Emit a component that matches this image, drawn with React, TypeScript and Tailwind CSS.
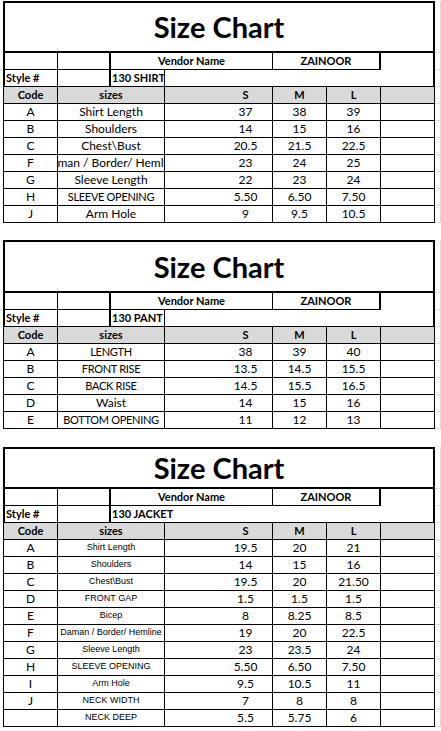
import React from "react";

type Row = [string, string, string, string, string];

const shirt: Row[] = [
  ["A", "Shirt Length", "37", "38", "39"],
  ["B", "Shoulders", "14", "15", "16"],
  ["C", "Chest\\Bust", "20.5", "21.5", "22.5"],
  ["F", "Daman / Border/ Hemline", "23", "24", "25"],
  ["G", "Sleeve Length", "22", "23", "24"],
  ["H", "SLEEVE OPENING", "5.50", "6.50", "7.50"],
  ["J", "Arm Hole", "9", "9.5", "10.5"],
];

const pant: Row[] = [
  ["A", "LENGTH", "38", "39", "40"],
  ["B", "FRONT RISE", "13.5", "14.5", "15.5"],
  ["C", "BACK RISE", "14.5", "15.5", "16.5"],
  ["D", "Waist", "14", "15", "16"],
  ["E", "BOTTOM OPENING", "11", "12", "13"],
];

const jacket: Row[] = [
  ["A", "Shirt Length", "19.5", "20", "21"],
  ["B", "Shoulders", "14", "15", "16"],
  ["C", "Chest\\Bust", "19.5", "20", "21.50"],
  ["D", "FRONT GAP", "1.5", "1.5", "1.5"],
  ["E", "Bicep", "8", "8.25", "8.5"],
  ["F", "Daman / Border/ Hemline", "19", "20", "22.5"],
  ["G", "Sleeve Length", "23", "23.5", "24"],
  ["H", "SLEEVE OPENING", "5.50", "6.50", "7.50"],
  ["I", "Arm Hole", "9.5", "10.5", "11"],
  ["J", "NECK WIDTH", "7", "8", "8"],
  ["", "NECK DEEP", "5.5", "5.75", "6"],
];

const cell =
  "flex h-[17px] items-center justify-center overflow-hidden whitespace-nowrap border-black";

// excel gridline stub on the right edge
const Grid = () => <div className="h-[17px] border-b border-r border-[#dadcdd]" />;

interface SheetProps {
  style: string;
  rows: Row[];
  titleH: string;
  arial?: boolean;
}

const nameClass = (name: string, arial?: boolean) => {
  if (arial) return "font-['Liberation_Sans',Arial,sans-serif] text-[9px]";
  // calibri caps are narrow, squeeze the lato ones a bit
  if (name === name.toUpperCase()) return "text-[11px] tracking-[-0.3px]";
  return "text-[12px]";
};

const Sheet = ({ style, rows, titleH, arial }: SheetProps) => {
  return (
    <div className="grid grid-cols-[55px_53px_54px_54px_54px_54px_54px_54px_6px]">
      {/* Title */}
      <div
        className={`col-span-8 flex items-center justify-center border-2 border-black text-[29px] font-bold ${titleH}`}
      >
        Size Chart
      </div>
      <div className="border-b border-r border-[#dadcdd]" />

      {/* Vendor row */}
      <div className={`${cell} border-b border-l-2 border-r`} />
      <div className={`${cell} border-b border-r-2`} />
      <div className={`${cell} col-span-3 border-b border-r text-[11px] font-bold`}>
        Vendor Name
      </div>
      <div className={`${cell} col-span-2 border-b border-r-2 text-[11px] font-bold`}>
        ZAINOOR
      </div>
      <div className="row-span-2 h-[34px] border-b border-r-2 border-black" />
      <Grid />

      {/* Style row */}
      <div className={`${cell} justify-start border-b border-l-2 border-r pl-px text-[11px] font-bold`}>
        Style #
      </div>
      <div className={`${cell} border-b border-r-2`} />
      <div
        className={`flex h-[17px] items-center overflow-visible whitespace-nowrap border-b border-black pl-px text-[11px] font-bold ${
          arial ? "" : "border-r"
        }`}
      >
        {style}
      </div>
      <div className={`${cell} col-span-4 border-b`} />
      <Grid />

      {/* Header */}
      <div className={`${cell} border-b border-l border-r bg-[#d9d9d9] text-[11px] font-bold`}>Code</div>
      <div className={`${cell} col-span-2 border-b border-r bg-[#d9d9d9] text-[11px] font-bold`}>
        sizes
      </div>
      <div className={`${cell} border-b bg-[#d9d9d9]`} />
      <div className={`${cell} border-b border-r bg-[#d9d9d9] text-[11px] font-bold`}>S</div>
      <div className={`${cell} border-b border-r bg-[#d9d9d9] text-[11px] font-bold`}>M</div>
      <div className={`${cell} border-b border-r bg-[#d9d9d9] text-[11px] font-bold`}>L</div>
      <div className={`${cell} border-b border-r bg-[#d9d9d9]`} />
      <Grid />

      {/* Data */}
      {rows.map(([code, name, s, m, l], i) => (
        <React.Fragment key={i}>
          <div className={`${cell} border-b border-l border-r text-[12px]`}>{code}</div>
          <div className={`${cell} col-span-2 border-b border-r ${nameClass(name, arial)}`}>{name}</div>
          <div className={`${cell} border-b`} />
          <div className={`${cell} border-b border-r text-[12px]`}>{s}</div>
          <div className={`${cell} border-b border-r text-[12px]`}>{m}</div>
          <div className={`${cell} border-b border-r text-[12px]`}>{l}</div>
          <div className={`${cell} border-b border-r`} />
          <Grid />
        </React.Fragment>
      ))}
    </div>
  );
};

export default function App() {
  return (
    <div className="flex min-h-[731px] w-[441px] flex-col bg-white pl-[3px] pt-px font-['Lato',sans-serif] text-black">
      <Sheet style="130 SHIRT" rows={shirt} titleH="h-[52px]" />
      <div className="h-[17px]" />
      <Sheet style="130 PANT" rows={pant} titleH="h-[53px]" />
      <div className="h-[18px]" />
      <Sheet style="130 JACKET" rows={jacket} titleH="h-[42px]" arial />
    </div>
  );
}
